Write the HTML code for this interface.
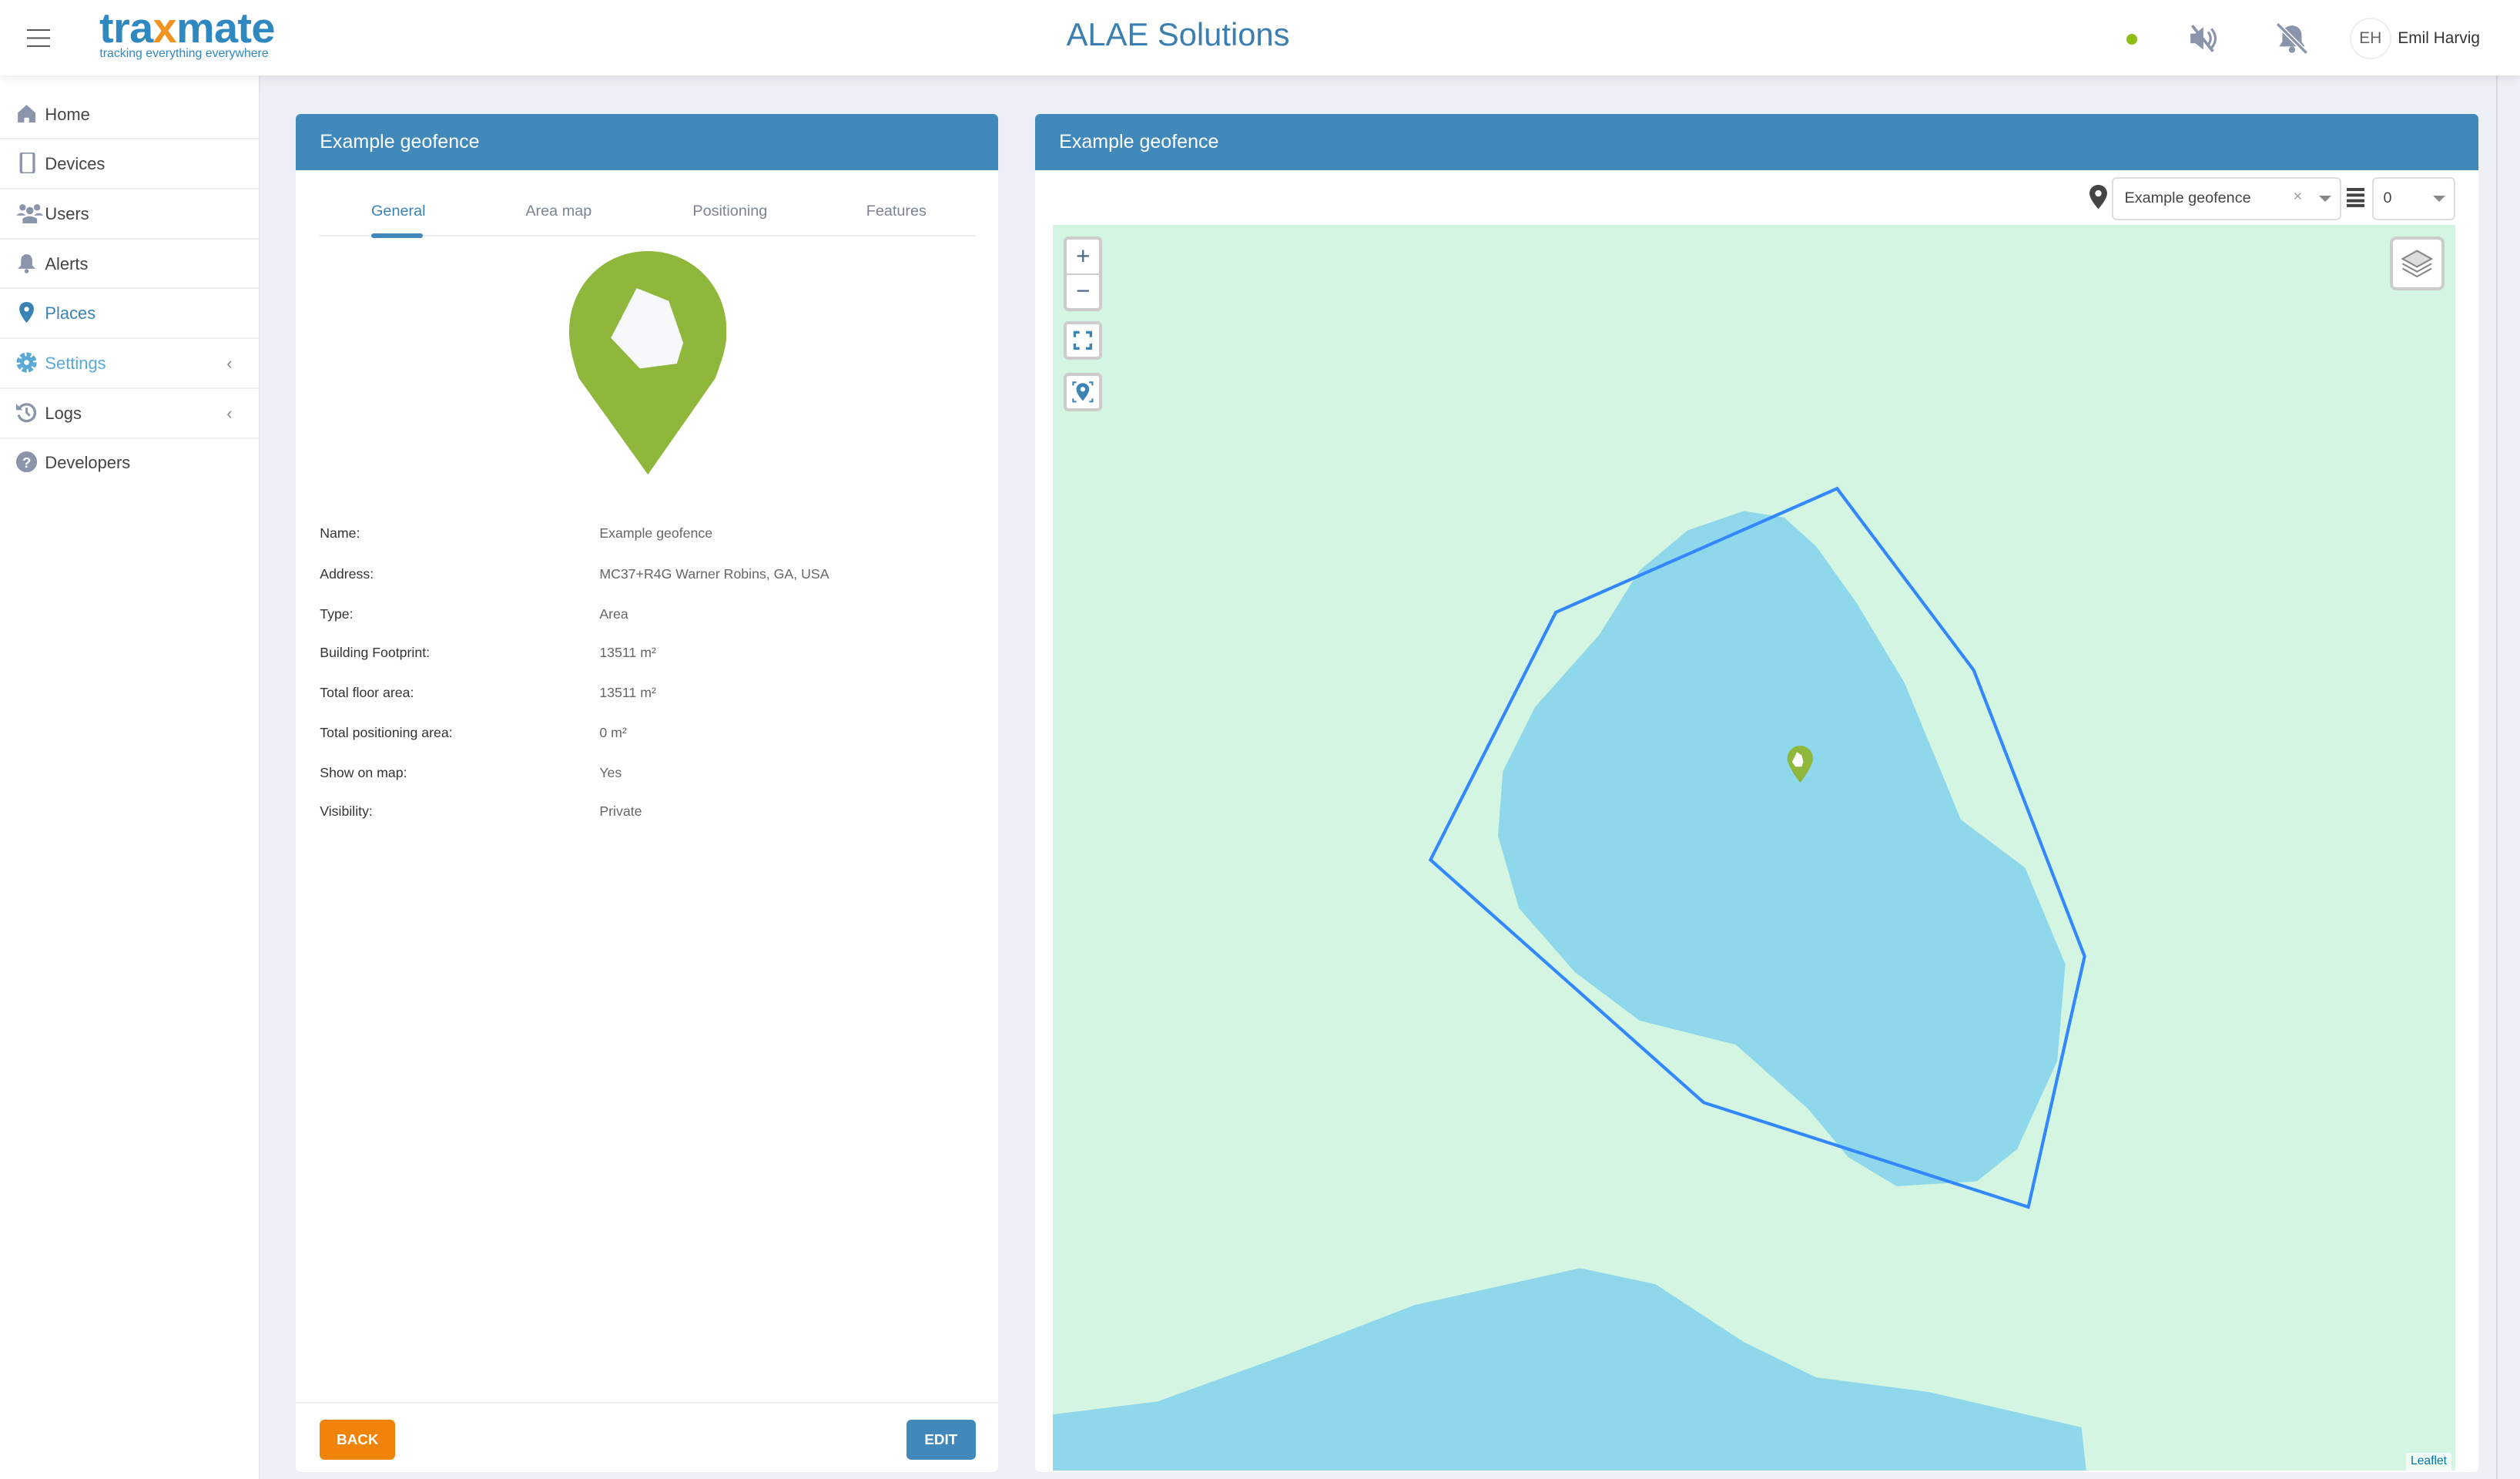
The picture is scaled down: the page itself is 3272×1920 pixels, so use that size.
<!DOCTYPE html>
<html><head><meta charset="utf-8"><style>
html,body{margin:0;padding:0;}
body{width:3272px;height:1919px;overflow:hidden;background:#edf0f6;font-family:"Liberation Sans",sans-serif;}
#r{zoom:2.0867;width:1568px;height:920px;position:relative;overflow:hidden;}
.a{position:absolute;}
.hdr{left:0;top:0;width:1568px;height:47px;background:#fff;box-shadow:0 2px 6px rgba(0,0,0,.08);z-index:3}
.side{left:0;top:47px;width:161px;height:873px;background:#fff;border-right:1px solid #e3e6ec}
.item{position:absolute;left:0;width:161px;height:30px;border-bottom:1px solid #eceef2;font-size:10.5px;color:#444;}
.item span{position:absolute;left:28px;top:9px}
.item svg{position:absolute;left:10px;top:8px}
.card{background:#fff;border-radius:3px;}
.ch{background:#4289bb;color:#fff;font-size:12px;height:35px;line-height:35px;padding-left:15px;border-radius:3px 3px 0 0}
.tab{position:absolute;top:126px;font-size:9.5px;color:#7b8595}
.lbl{position:absolute;left:199px;font-size:8.5px;color:#333}
.val{position:absolute;left:373px;font-size:8.5px;color:#666}
.btn{position:absolute;color:#fff;font-size:9px;font-weight:bold;text-align:center;line-height:25px;border-radius:3px;height:25px}
.ctl{position:absolute;background:#fff;border:2px solid rgba(0,0,0,.2);border-radius:3px;left:662px;width:20px;}
</style></head><body><div id="r">
<div class="a hdr">
 <div class="a" style="left:17px;top:18px;width:14px;height:1.3px;background:#555;box-shadow:0 5px 0 #555,0 10px 0 #555"></div>
 <div class="a" style="left:62px;top:3px;font-size:26px;font-weight:bold;color:#2f88c0;letter-spacing:-0.3px;transform:scaleX(1.03);transform-origin:left">tra<span style="color:#f29220">x</span>mate</div>
 <div class="a" style="left:62px;top:29px;font-size:7.6px;color:#2f88c0">tracking everything everywhere</div>
 <div class="a" style="left:0;width:1466px;top:10px;text-align:center;font-size:20px;color:#3b7fb1">ALAE Solutions</div>
 <div class="a" style="left:1323px;top:21px;width:7px;height:7px;border-radius:50%;background:#8cbd12"></div>
 <svg class="a" style="left:1361px;top:14px" width="20" height="20" viewBox="0 0 20 20"><path d="M2 7h3l5-4v14l-5-4H2z" fill="#8a94ab"/><path d="M13 6q3 4 0 8M15 4q5 6 0 12" stroke="#8a94ab" stroke-width="1.5" fill="none"/><path d="M3 2l13 16" stroke="#8a94ab" stroke-width="1.8"/></svg>
 <svg class="a" style="left:1415px;top:13px" width="22" height="22" viewBox="0 0 22 22"><path d="M11 3c-4 0-6 3-6 6v4l-2 3h16l-2-3V9c0-3-2-6-6-6z" fill="#8a94ab"/><circle cx="11" cy="18" r="2" fill="#8a94ab"/><path d="M2 2l18 18" stroke="#fff" stroke-width="3"/><path d="M2 2l18 18" stroke="#8a94ab" stroke-width="1.6"/></svg>
 <div class="a" style="left:1462px;top:11px;width:24px;height:24px;border-radius:50%;border:1px solid #eee;font-size:10px;color:#666;text-align:center;line-height:24px">EH</div>
 <div class="a" style="left:1492px;top:18px;font-size:10px;color:#333">Emil Harvig</div>
</div>
<div class="a side">
 <div class="item" style="top:9px"><svg width="13" height="13" viewBox="0 0 13 13"><path d="M1 6L6.5 1 12 6v6H8V9H5v3H1z" fill="#8a94ab"/></svg><span>Home</span></div>
 <div class="item" style="top:40px"><svg width="13" height="13" viewBox="0 0 13 13"><rect x="3" y="0" width="8" height="13" rx="1.5" fill="none" stroke="#8a94ab" stroke-width="1.6"/></svg><span>Devices</span></div>
 <div class="item" style="top:71px"><svg width="17" height="13" viewBox="0 0 17 13"><circle cx="4" cy="3" r="2" fill="#8a94ab"/><circle cx="13" cy="3" r="2" fill="#8a94ab"/><circle cx="8.5" cy="5" r="2.3" fill="#8a94ab"/><path d="M4 13v-3q4-3 9 0v3zM0 8q3-3 6 0zM11 8q3-3 6 0z" fill="#8a94ab"/></svg><span>Users</span></div>
 <div class="item" style="top:102px"><svg width="13" height="13" viewBox="0 0 13 13"><path d="M6.5 1C4 1 3 3 3 5v3l-2 2h11l-2-2V5c0-2-1-4-3.5-4z" fill="#8a94ab"/><circle cx="6.5" cy="11.5" r="1.3" fill="#8a94ab"/></svg><span>Alerts</span></div>
 <div class="item" style="top:133px;color:#3b82b5"><svg width="13" height="13" viewBox="0 0 13 13"><path d="M6.5 0C3.5 0 2 2 2 4.5 2 8 6.5 13 6.5 13S11 8 11 4.5C11 2 9.5 0 6.5 0z" fill="#3b82b5"/><circle cx="6.5" cy="4.5" r="1.5" fill="#fff"/></svg><span>Places</span></div>
 <div class="item" style="top:164px;color:#5aa9d6"><svg width="13" height="13" viewBox="0 0 13 13"><circle cx="6.5" cy="6.5" r="4.5" fill="none" stroke="#5aa9d6" stroke-width="3.5" stroke-dasharray="2.5 1"/><circle cx="6.5" cy="6.5" r="4" fill="#5aa9d6"/><circle cx="6.5" cy="6.5" r="1.6" fill="#fff"/></svg><span>Settings</span><span style="left:141px;color:#888">‹</span></div>
 <div class="item" style="top:195px"><svg width="13" height="13" viewBox="0 0 13 13"><path d="M2 4a5.2 5.2 0 1 1 -0.5 4" fill="none" stroke="#8a94ab" stroke-width="1.6"/><path d="M0 1v4h4z" fill="#8a94ab"/><path d="M6.5 3.5v3l2 2" stroke="#8a94ab" stroke-width="1.4" fill="none"/></svg><span>Logs</span><span style="left:141px;color:#888">‹</span></div>
 <div class="item" style="top:226px;border:none"><svg width="13" height="13" viewBox="0 0 13 13"><circle cx="6.5" cy="6.5" r="6.5" fill="#8a94ab"/><text x="6.5" y="10" font-size="9" font-weight="bold" fill="#fff" text-anchor="middle" font-family="Liberation Sans">?</text></svg><span>Developers</span></div>
</div>

<div class="a card" style="left:184px;top:71px;width:437px;height:845px">
 <div class="ch">Example geofence</div>
</div>
<div class="tab" style="left:231px;color:#3b82b5">General</div>
<div class="tab" style="left:327px">Area map</div>
<div class="tab" style="left:431px">Positioning</div>
<div class="tab" style="left:539px">Features</div>
<div class="a" style="left:199px;top:146px;width:408px;height:1px;background:#eceef2"></div>
<div class="a" style="left:231px;top:145px;width:32px;height:3px;border-radius:2px;background:#4289bb"></div>
<svg class="a" style="left:354px;top:156px" width="98" height="139" viewBox="0 0 98 139"><path d="M49 0C21 0 0 22 0 50c0 9 2 17 6 29L49 139 91 79c4-11 7-19 7-29C98 22 77 0 49 0z" fill="#8fb73c"/><path d="M42 23L62 31 71 57 67 70 44 73 26 54z" fill="#f7f8fa"/></svg>
<div class="lbl" style="top:327px">Name:</div><div class="val" style="top:327px">Example geofence</div>
<div class="lbl" style="top:352px">Address:</div><div class="val" style="top:352px">MC37+R4G Warner Robins, GA, USA</div>
<div class="lbl" style="top:377px">Type:</div><div class="val" style="top:377px">Area</div>
<div class="lbl" style="top:401px">Building Footprint:</div><div class="val" style="top:401px">13511 m²</div>
<div class="lbl" style="top:426px">Total floor area:</div><div class="val" style="top:426px">13511 m²</div>
<div class="lbl" style="top:451px">Total positioning area:</div><div class="val" style="top:451px">0 m²</div>
<div class="lbl" style="top:476px">Show on map:</div><div class="val" style="top:476px">Yes</div>
<div class="lbl" style="top:500px">Visibility:</div><div class="val" style="top:500px">Private</div>
<div class="a" style="left:184px;top:872px;width:437px;height:1px;background:#eceef2"></div>
<div class="btn" style="left:199px;top:883px;width:47px;background:#f0830a">BACK</div>
<div class="btn" style="left:564px;top:883px;width:43px;background:#4289bb">EDIT</div>

<div class="a card" style="left:644px;top:71px;width:898px;height:845px">
 <div class="ch">Example geofence</div>
</div>
<svg class="a" style="left:1300px;top:115px" width="11" height="15" viewBox="0 0 11 15"><path d="M5.5 0C2.5 0 0 2.3 0 5.3 0 9 5.5 15 5.5 15S11 9 11 5.3C11 2.3 8.5 0 5.5 0z" fill="#444"/><circle cx="5.5" cy="5.3" r="2" fill="#fff"/></svg>
<div class="a" style="left:1314px;top:110px;width:141px;height:25px;border:1px solid #ddd;border-radius:3px;background:#fff;font-size:9.5px;color:#444">
 <span class="a" style="left:7px;top:7px">Example geofence</span><span class="a" style="left:112px;top:6px;color:#999">×</span><span class="a" style="left:128px;top:11px;border:4px solid transparent;border-top:4px solid #888"></span></div>
<div class="a" style="left:1460px;top:117px;width:11px;height:2px;background:#444;box-shadow:0 3.5px 0 #444,0 7px 0 #444,0 10px 0 #444"></div>
<div class="a" style="left:1476px;top:110px;width:50px;height:25px;border:1px solid #ddd;border-radius:3px;background:#fff;font-size:9.5px;color:#444">
 <span class="a" style="left:6px;top:7px">0</span><span class="a" style="left:37px;top:11px;border:4px solid transparent;border-top:4px solid #888"></span></div>

<svg class="a" style="left:655px;top:140px" width="873" height="775" viewBox="655 140 873 775">
 <rect x="655" y="140" width="873" height="775" fill="#d3f5e1"/>
 <path d="M1085 318L1110 322 1130 340 1155 375 1185 425 1220 510 1260 540 1285 600 1280 660 1255 715 1230 735 1180 738 1150 720 1125 690 1080 650 1020 635 980 605 945 565 932 520 935 480 955 440 995 395 1020 355 1050 330z" fill="#8fd7ea"/>
 <path d="M655 880L720 872 800 843 880 812 983 789 1030 799 1085 835 1130 857 1200 866 1295 888 1298 915 655 915z" fill="#8fd7ea"/>
 <path d="M1143 304L1228 417 1297 595 1262 751 1060 686 890 535 968 381z" fill="none" stroke="#3388ff" stroke-width="2"/>
 <path d="M1120 464c-5 0-8 4-8 8 0 5 8 15 8 15s8-10 8-15c0-4-3-8-8-8z" fill="#8fb73c"/><path d="M1118 468l3 2 1 4-1 3-4 0-2-3z" fill="#fff"/>
</svg>
<div class="ctl" style="top:147px;height:43px"><div style="height:21px;border-bottom:1px solid #ccc;text-align:center;font-size:15px;color:#4a6b8a;line-height:21px">+</div><div style="text-align:center;font-size:15px;color:#4a6b8a;line-height:20px">−</div></div>
<div class="ctl" style="top:200px;height:20px"><svg width="20" height="20" viewBox="0 0 20 20"><path d="M5 8V5h3M12 5h3v3M15 12v3h-3M8 15H5v-3" stroke="#3b82b5" stroke-width="1.6" fill="none"/></svg></div>
<div class="ctl" style="top:232px;height:20px"><svg width="20" height="20" viewBox="0 0 20 20"><path d="M4 6V4h2M14 4h2v2M16 14v2h-2M6 16H4v-2" stroke="#3b82b5" stroke-width="1" fill="none"/><path d="M10 4.5c-2.3 0-4 1.7-4 3.8 0 2.8 4 7.2 4 7.2s4-4.4 4-7.2c0-2.1-1.7-3.8-4-3.8z" fill="#3b82b5"/><circle cx="10" cy="8.3" r="1.5" fill="#fff"/></svg></div>
<div class="a" style="left:1487px;top:147px;width:30px;height:30px;background:#fff;border:2px solid rgba(0,0,0,.2);border-radius:4px"><svg width="30" height="30" viewBox="0 0 30 30"><path d="M6 12l9-5 9 5-9 5z" fill="#ddd" stroke="#888"/><path d="M6 15l9 5 9-5M6 18l9 5 9-5" fill="none" stroke="#888"/></svg></div>
<div class="a" style="left:1497px;top:904px;font-size:7.5px;color:#0078a8;background:rgba(255,255,255,.7);padding:1px 3px">Leaflet</div>
<div class="a" style="left:1553px;top:47px;width:1px;height:873px;background:#d6d9df"></div>
</div></body></html>
